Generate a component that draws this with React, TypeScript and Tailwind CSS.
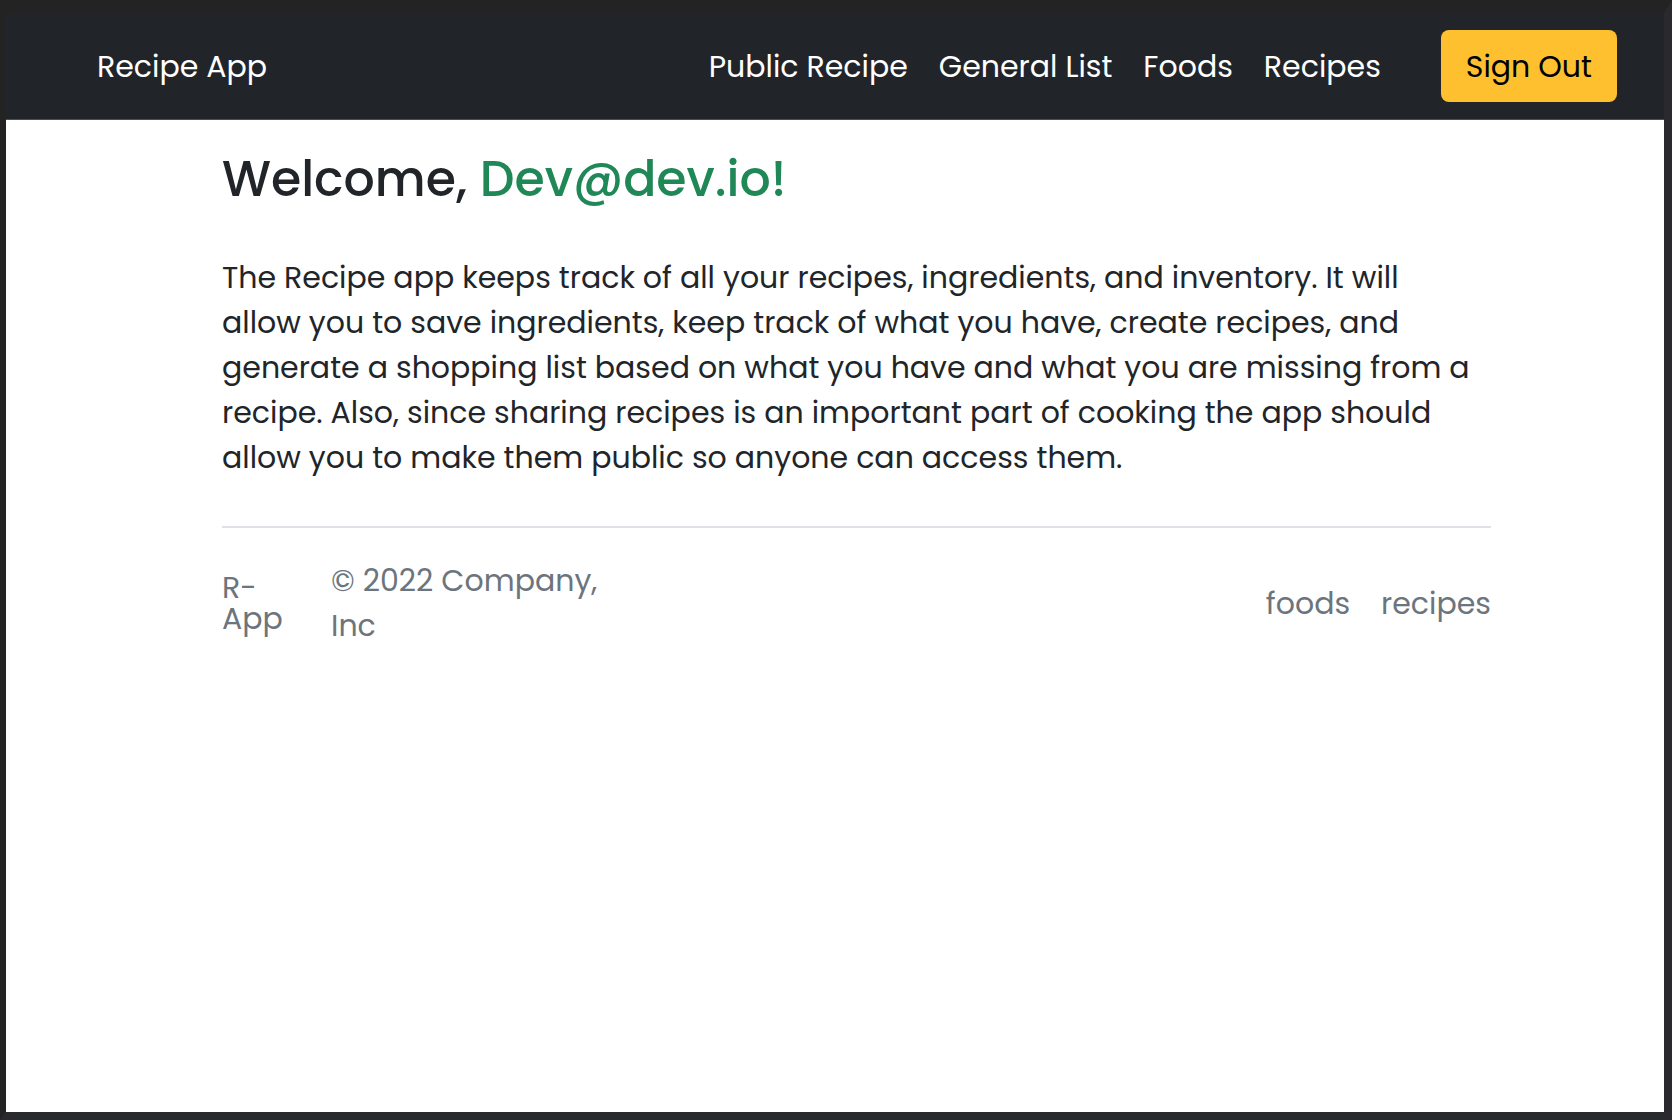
const navLinks = ['Public Recipe', 'General List', 'Foods', 'Recipes'];
const footerLinks = ['foods', 'recipes'];

export default function App() {
  return (
    <div className="flex min-h-screen flex-col border-t-[13px] border-r-8 border-b-8 border-l-6 border-t-[#232324] border-r-[#29292e] border-b-[#292a2d] border-l-[#232324] bg-white font-['Poppins',Inter,sans-serif] text-[30px] leading-[45px] text-[#212529]">
      <header className="flex items-center justify-between border-b border-[#4d5053] bg-[#212529] py-[17px] pr-[47px] pl-[91px] text-white">
        <a href="#home">Recipe App</a>
        <nav className="flex items-center gap-[31px]">
          {navLinks.map((label) => (
            <a key={label} href="#nav">
              {label}
            </a>
          ))}
          <button
            type="button"
            className="ml-[29px] h-[72px] rounded-lg bg-[#ffc02f] px-[25px] text-black"
          >
            Sign Out
          </button>
        </nav>
      </header>
      <main className="pt-[29px] pr-[173px] pl-[216px]">
        <h1 className="text-[49px] leading-[60px] font-medium">
          Welcome, <span className="text-[#208756]">Dev@dev.io!</span>
        </h1>
        <p className="mt-[46px] pr-3">
          The Recipe app keeps track of all your recipes, ingredients, and inventory. It will allow
          you to save ingredients, keep track of what you have, create recipes, and generate a
          shopping list based on what you have and what you are missing from a recipe. Also, since
          sharing recipes is an important part of cooking the app should allow you to make them
          public so anyone can access them.
        </p>
        <footer className="mt-[46px] flex items-center justify-between border-t-2 border-[#dee2e6] pt-[30px] text-[#6c757d]">
          <div className="flex items-center">
            <a href="#home" className="mr-[47px] w-[62px] leading-[31px]">
              R-App
            </a>
            <span className="w-[290px]">© 2022 Company, Inc</span>
          </div>
          <nav className="flex gap-[31px]">
            {footerLinks.map((label) => (
              <a key={label} href="#footer">
                {label}
              </a>
            ))}
          </nav>
        </footer>
      </main>
    </div>
  );
}
